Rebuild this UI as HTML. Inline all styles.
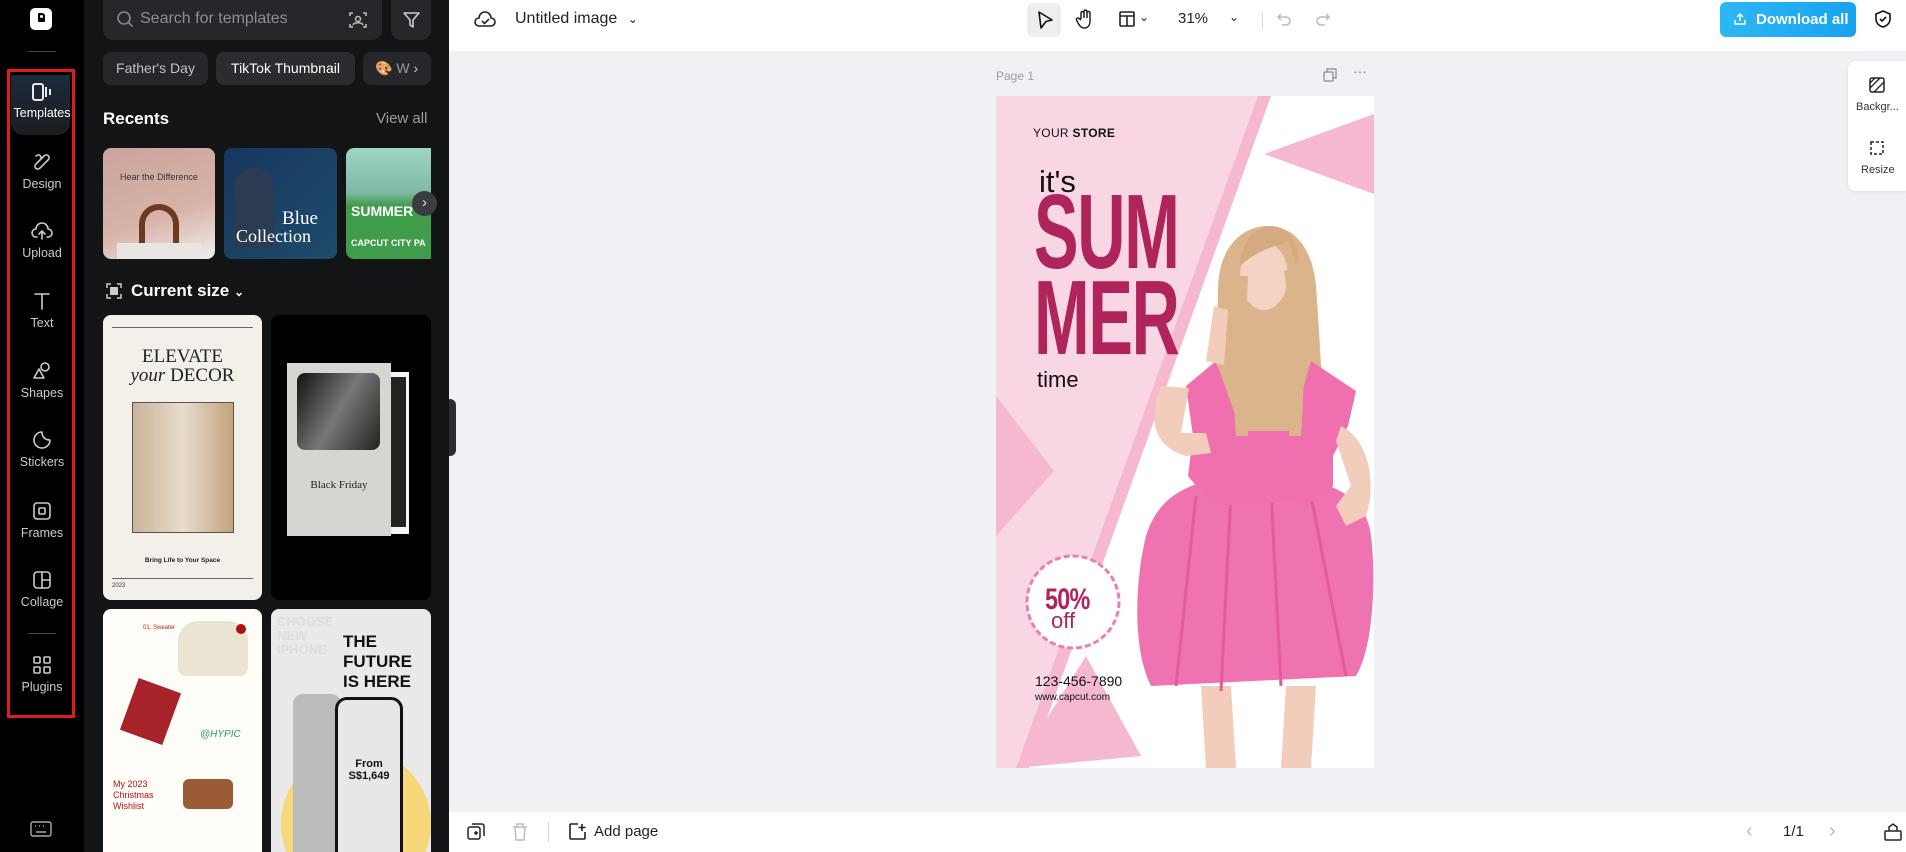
<!DOCTYPE html>
<html><head><meta charset="utf-8"><style>
*{box-sizing:border-box;margin:0;padding:0}
html,body{width:1906px;height:852px;overflow:hidden}
body{font-family:"Liberation Sans",sans-serif;background:#eff1f4;position:relative}
.abs{position:absolute}
#rail{left:0;top:0;width:84px;height:852px;background:#000}
#panel{left:84px;top:0;width:365px;height:852px;background:#131416;overflow:hidden}
.ri{position:absolute;left:0;width:84px;text-align:center;color:#c9cacc;font-size:12.5px}
.ri svg{display:block;margin:0 auto 4px}
.chip{position:absolute;top:52px;height:33px;border-radius:8px;background:#25272b;color:#bfc1c4;font-size:14px;line-height:33px;text-align:center}
#top{left:449px;top:0;width:1457px;height:51px;background:#fff}
#bot{left:449px;top:812px;width:1457px;height:40px;background:#fff}
.ic{stroke:#333;fill:none;stroke-width:1.6;stroke-linecap:round;stroke-linejoin:round}
</style></head><body>

<div id="rail" class="abs">
  <div class="abs" style="left:30px;top:8px;width:22px;height:22px;background:#fff;border-radius:5px"><div class="abs" style="left:8px;top:5px;width:7px;height:9px;background:#000;border-radius:1px 3px 1px 1px"></div><div class="abs" style="left:10px;top:7px;width:3px;height:3px;background:#fff;border-radius:50%"></div></div>
  <div class="abs" style="left:28px;top:51px;width:28px;height:1px;background:#444"></div>
  <div class="abs" style="left:7px;top:69px;width:68px;height:649px;border:3px solid #e01b1b"></div>
  <div class="abs" style="left:11px;top:75px;width:59px;height:60px;background:linear-gradient(#1d2a38,#1a1d22);border-radius:0 0 12px 12px"></div>
  <div class="ri" style="top:82px;color:#fff"><svg width="22" height="20" viewBox="0 0 22 20"><rect x="2" y="2" width="10" height="16" rx="2" stroke="#fff" stroke-width="1.8" fill="none"/><path d="M15 5v10M19 7v6" stroke="#fff" stroke-width="1.8"/></svg>Templates</div>
  <div class="ri" style="top:151px"><svg width="22" height="22" viewBox="0 0 22 22" class="ic" style="stroke:#c9cacc"><path d="M5 5c3-3 7 1 4 4L5 13c-3 3 1 7 4 4l8-8c3-3-1-7-4-4L5 13"/></svg>Design</div>
  <div class="ri" style="top:220px"><svg width="24" height="22" viewBox="0 0 24 22" class="ic" style="stroke:#c9cacc"><path d="M7 17H6a4 4 0 0 1 0-8 6 6 0 0 1 12 0 4 4 0 0 1 0 8h-1M12 19v-8M9 14l3-3 3 3"/></svg>Upload</div>
  <div class="ri" style="top:290px"><svg width="22" height="22" viewBox="0 0 22 22" class="ic" style="stroke:#c9cacc"><path d="M4 4h14M11 4v15"/></svg>Text</div>
  <div class="ri" style="top:360px"><svg width="22" height="22" viewBox="0 0 22 22" class="ic" style="stroke:#c9cacc"><circle cx="14" cy="7" r="4"/><path d="M3 18l5-9 5 9z"/></svg>Shapes</div>
  <div class="ri" style="top:429px"><svg width="22" height="22" viewBox="0 0 22 22" class="ic" style="stroke:#c9cacc"><path d="M19 11A8 8 0 1 1 11 3c0 5 3 8 8 8z"/></svg>Stickers</div>
  <div class="ri" style="top:500px"><svg width="22" height="22" viewBox="0 0 22 22" class="ic" style="stroke:#c9cacc"><rect x="3" y="3" width="16" height="16" rx="3"/><rect x="8" y="8" width="6" height="6" rx="1"/></svg>Frames</div>
  <div class="ri" style="top:569px"><svg width="22" height="22" viewBox="0 0 22 22" class="ic" style="stroke:#c9cacc"><rect x="3" y="3" width="16" height="16" rx="3"/><path d="M11 3v16M11 11h8"/></svg>Collage</div>
  <div class="abs" style="left:28px;top:633px;width:28px;height:1px;background:#444"></div>
  <div class="ri" style="top:654px"><svg width="22" height="22" viewBox="0 0 22 22" class="ic" style="stroke:#c9cacc"><rect x="3" y="3" width="6" height="6" rx="1"/><rect x="13" y="3" width="6" height="6" rx="1"/><rect x="3" y="13" width="6" height="6" rx="1"/><rect x="13" y="13" width="6" height="6" rx="1"/></svg>Plugins</div>
  <svg class="abs" style="left:30px;top:821px" width="22" height="16" viewBox="0 0 22 16"><rect x="1" y="1" width="20" height="14" rx="2" stroke="#aaa" fill="none" stroke-width="1.4"/><path d="M5 5h1M9 5h1M13 5h1M17 5h0M6 11h10" stroke="#aaa" stroke-width="1.4"/></svg>
</div>

<div id="panel" class="abs">
  <div class="abs" style="left:19px;top:0;width:279px;height:40px;background:#25272b;border-radius:0 0 10px 10px"></div>
  <svg class="abs" style="left:32px;top:10px" width="18" height="18" viewBox="0 0 18 18"><circle cx="8" cy="8" r="6" stroke="#888" stroke-width="1.6" fill="none"/><path d="M12.5 12.5l4 4" stroke="#888" stroke-width="1.6"/></svg>
  <div class="abs" style="left:56px;top:10px;color:#8c8e92;font-size:16px">Search for templates</div>
  <svg class="abs" style="left:264px;top:10px" width="20" height="20" viewBox="0 0 20 20"><path d="M2 6V3h3M15 3h3v3M18 14v3h-3M5 17H2v-3" stroke="#bbb" stroke-width="1.6" fill="none"/><circle cx="10" cy="9" r="2.5" stroke="#bbb" stroke-width="1.5" fill="none"/><path d="M5 15c1-3 9-3 10 0" stroke="#bbb" stroke-width="1.5" fill="none"/></svg>
  <div class="abs" style="left:307px;top:0;width:40px;height:40px;background:#25272b;border-radius:0 0 10px 10px"></div>
  <svg class="abs" style="left:317px;top:10px" width="20" height="20" viewBox="0 0 20 20"><path d="M3 3h15l-6 7v7l-3-2v-5z" stroke="#ccc" stroke-width="1.6" fill="none" stroke-linejoin="round"/></svg>
  <div class="chip" style="left:19px;width:105px">Father's Day</div>
  <div class="chip" style="left:132px;width:139px;color:#fff;background:#2a2c30">TikTok Thumbnail</div>
  <div class="chip" style="left:279px;width:68px;text-align:left;padding-left:12px;color:#999">🎨 W <span style="color:#ccc">›</span></div>
  <div class="abs" style="left:19px;top:109px;color:#fff;font-size:17px;font-weight:bold">Recents</div>
  <div class="abs" style="left:292px;top:110px;color:#9a9c9f;font-size:15px">View all</div>
  <div class="abs" style="left:19px;top:148px;width:112px;height:111px;border-radius:8px;background:linear-gradient(160deg,#c9a49a,#d8b3a8 60%,#eee);overflow:hidden">
    <div style="color:#333;font-size:9px;text-align:center;margin-top:24px">Hear the Difference</div>
    <div class="abs" style="left:36px;top:56px;width:40px;height:40px;border:6px solid #6b3a22;border-bottom:none;border-radius:20px 20px 0 0"></div>
    <div class="abs" style="left:14px;top:95px;width:84px;height:20px;background:#e8e6e3"></div>
  </div>
  <div class="abs" style="left:140px;top:148px;width:113px;height:111px;border-radius:8px;background:linear-gradient(135deg,#16365e,#1f4c6b);overflow:hidden">
    <div class="abs" style="left:10px;top:20px;width:40px;height:80px;background:#2c3b52;border-radius:20px 20px 0 0"></div>
    <div class="abs" style="left:58px;top:60px;color:#fff;font-family:'Liberation Serif',serif;font-size:19px">Blue</div>
    <div class="abs" style="left:12px;top:78px;color:#fff;font-family:'Liberation Serif',serif;font-size:18px">Collection</div>
  </div>
  <div class="abs" style="left:262px;top:148px;width:85px;height:111px;border-radius:8px 0 0 8px;background:linear-gradient(#9ed6c6 0,#7fb9a5 40%,#3f9c4a 52%,#3f9c4a);overflow:hidden">
    <div class="abs" style="left:5px;top:55px;color:#fff;font-weight:bold;font-size:14px">SUMMER</div>
    <div class="abs" style="left:5px;top:90px;color:#fff;font-weight:bold;font-size:9px">CAPCUT CITY PA</div>
  </div>
  <div class="abs" style="left:328px;top:191px;width:25px;height:25px;border-radius:50%;background:#3a3c40;color:#ddd;text-align:center;line-height:24px;font-size:15px">›</div>
  <svg class="abs" style="left:22px;top:283px" width="16" height="16" viewBox="0 0 16 16"><path d="M1 5V1h4M11 1h4v4M15 11v4h-4M5 15H1v-4" stroke="#ccc" stroke-width="1.5" fill="none"/><rect x="4" y="4" width="8" height="8" fill="#ccc"/></svg>
  <div class="abs" style="left:47px;top:281px;color:#fff;font-size:17px;font-weight:bold">Current size <span style="font-size:12px">⌄</span></div>
  <div class="abs" style="left:19px;top:315px;width:159px;height:285px;background:#f3efe9;border-radius:8px;overflow:hidden">
    <div class="abs" style="left:9px;top:12px;width:141px;height:1px;background:#666"></div>
    <div class="abs" style="left:0;top:32px;width:159px;text-align:center;font-family:'Liberation Serif',serif;font-size:19px;color:#222;line-height:19px">ELEVATE<br><i>your</i> DECOR</div>
    <div class="abs" style="left:29px;top:87px;width:102px;height:131px;background:linear-gradient(90deg,#c9b49a,#e8dccb 50%,#c2a37e);border:1px solid #555"></div>
    <div class="abs" style="left:0;top:242px;width:159px;text-align:center;font-size:6.5px;font-weight:bold;color:#222">Bring Life to Your Space</div>
    <div class="abs" style="left:9px;top:263px;width:141px;height:1px;background:#666"></div>
    <div class="abs" style="left:9px;top:268px;font-size:6px;color:#333">2023</div>
  </div>
  <div class="abs" style="left:187px;top:315px;width:160px;height:285px;background:#000;border-radius:8px;overflow:hidden">
    <div class="abs" style="left:112px;top:57px;width:26px;height:162px;background:#f4f4f2"></div>
    <div class="abs" style="left:115px;top:62px;width:20px;height:150px;background:#222"></div>
    <div class="abs" style="left:16px;top:48px;width:104px;height:173px;background:#d6d5d0"></div>
    <div class="abs" style="left:26px;top:58px;width:83px;height:77px;background:linear-gradient(120deg,#111,#777 50%,#222);border-radius:8px"></div>
    <div class="abs" style="left:16px;top:164px;width:104px;text-align:center;font-family:'Liberation Serif',serif;font-size:11px;color:#222">Black Friday</div>
  </div>
  <div class="abs" style="left:19px;top:609px;width:159px;height:243px;background:#fffdf8;border-radius:8px 8px 0 0;overflow:hidden">
    <div class="abs" style="left:40px;top:16px;font-size:6px;color:#b22">01. Sweater</div>
    <div class="abs" style="left:75px;top:12px;width:70px;height:55px;background:#ece4d2;border-radius:20px 20px 8px 8px"></div>
    <div class="abs" style="left:133px;top:15px;width:10px;height:10px;background:#b10f0f;border-radius:50%"></div>
    <div class="abs" style="left:25px;top:75px;width:45px;height:55px;background:#a8222a;transform:rotate(20deg)"></div>
    <div class="abs" style="left:97px;top:120px;font-size:10px;font-style:italic;color:#2a9d63">@HYPIC</div>
    <div class="abs" style="left:10px;top:170px;font-size:9px;color:#b11;line-height:11px">My 2023<br>Christmas<br>Wishlist</div>
    <div class="abs" style="left:80px;top:170px;width:50px;height:30px;background:#9a5a36;border-radius:6px"></div>
  </div>
  <div class="abs" style="left:187px;top:609px;width:160px;height:243px;background:#e9e9e9;border-radius:8px 8px 0 0;overflow:hidden">
    <div class="abs" style="left:6px;top:6px;font-size:13px;font-weight:bold;color:#ddd;line-height:14px">CHOOSE<br>NEW<br>IPHONE</div>
    <div class="abs" style="left:72px;top:23px;font-size:17px;font-weight:bold;color:#111;line-height:20px">THE<br>FUTURE<br>IS HERE</div>
    <div class="abs" style="left:10px;top:140px;width:150px;height:150px;border-radius:50%;background:#f6d77a"></div>
    <div class="abs" style="left:22px;top:85px;width:48px;height:170px;background:#bcbcbc;border-radius:10px"></div>
    <div class="abs" style="left:64px;top:88px;width:68px;height:170px;background:#e7e7e7;border:3px solid #111;border-radius:12px"></div>
    <div class="abs" style="left:64px;top:149px;width:68px;text-align:center;font-size:11px;font-weight:bold;color:#111">From<br>S$1,649</div>
  </div>
</div>
<div class="abs" style="left:449px;top:399px;width:7px;height:57px;background:#2a2c30;border-radius:0 6px 6px 0"></div>

<div id="top" class="abs">
  <svg class="abs" style="left:25px;top:9px" width="22" height="20" viewBox="0 0 22 20"><path d="M6 17H5a4 4 0 0 1 0-8 6 6 0 0 1 12 0 4 4 0 0 1 0 8H6z" stroke="#222" stroke-width="1.6" fill="none"/><path d="M8 12l2.5 2.5L15 10" stroke="#222" stroke-width="1.6" fill="none"/></svg>
  <div class="abs" style="left:66px;top:10px;font-size:16px;color:#222">Untitled image <span style="font-size:12px;margin-left:6px">⌄</span></div>
  <div class="abs" style="left:578px;top:3px;width:34px;height:34px;background:#eceef1;border-radius:6px"></div>
  <svg class="abs" style="left:586px;top:9px" width="20" height="22" viewBox="0 0 20 22"><path d="M4 3l13 8-6 1.5L6 19z" stroke="#111" stroke-width="1.6" fill="none" stroke-linejoin="round"/></svg>
  <svg class="abs" style="left:625px;top:8px" width="22" height="22" viewBox="0 0 22 22"><path d="M7 11V5a1.5 1.5 0 0 1 3 0v5V3.5a1.5 1.5 0 0 1 3 0V10V5a1.5 1.5 0 0 1 3 0v8c0 4-2 7-6 7-3 0-4-2-6-5l-1.5-3a1.5 1.5 0 0 1 2.5-1.5L7 12" stroke="#222" stroke-width="1.5" fill="none"/></svg>
  <svg class="abs" style="left:669px;top:10px" width="18" height="18" viewBox="0 0 18 18"><rect x="2" y="2" width="14" height="14" rx="1" stroke="#222" stroke-width="1.6" fill="none"/><path d="M2 6h14M9 6v10" stroke="#222" stroke-width="1.6"/></svg>
  <div class="abs" style="left:690px;top:10px;font-size:12px;color:#222">⌄</div>
  <div class="abs" style="left:729px;top:10px;font-size:15px;color:#222">31%</div>
  <div class="abs" style="left:780px;top:10px;font-size:12px;color:#222">⌄</div>
  <div class="abs" style="left:813px;top:12px;width:1px;height:18px;background:#ddd"></div>
  <svg class="abs" style="left:826px;top:11px" width="18" height="18" viewBox="0 0 18 18"><path d="M6 3L3 6l3 3M3 6h8a4 4 0 0 1 0 8H7" stroke="#bbb" stroke-width="1.5" fill="none"/></svg>
  <svg class="abs" style="left:865px;top:11px" width="18" height="18" viewBox="0 0 18 18"><path d="M12 3l3 3-3 3M15 6H7a4 4 0 0 0 0 8h4" stroke="#bbb" stroke-width="1.5" fill="none"/></svg>
  <div class="abs" style="left:1271px;top:2px;width:136px;height:35px;background:linear-gradient(90deg,#2db7f5,#18a3f0);border-radius:6px;color:#fff;font-size:15px;font-weight:bold;line-height:35px;padding-left:36px">Download all</div>
  <svg class="abs" style="left:1284px;top:12px" width="14" height="14" viewBox="0 0 14 14"><path d="M2 8v4h10V8M7 9V2M4 5l3-3 3 3" stroke="#fff" stroke-width="1.5" fill="none"/></svg>
  <svg class="abs" style="left:1424px;top:9px" width="20" height="20" viewBox="0 0 20 20"><path d="M10 2l7 3v5c0 4-3 7-7 8-4-1-7-4-7-8V5z" stroke="#111" stroke-width="1.6" fill="none"/><path d="M7 10l2 2 4-4" stroke="#111" stroke-width="1.6" fill="none"/></svg>
</div>

<div class="abs" style="left:996px;top:69px;font-size:12px;color:#9a9ca0">Page 1</div>
<svg class="abs" style="left:1323px;top:68px" width="14" height="14" viewBox="0 0 14 14"><rect x="1" y="4" width="9" height="9" rx="1" stroke="#888" stroke-width="1.2" fill="none"/><path d="M4 4V1h9v9h-3" stroke="#888" stroke-width="1.2" fill="none"/></svg>
<div class="abs" style="left:1353px;top:63px;font-size:14px;color:#777">···</div>

<div class="abs" style="left:996px;top:96px;width:378px;height:672px;background:#fff;overflow:hidden">
  <svg class="abs" style="left:0;top:0" width="378" height="672" viewBox="0 0 378 672">
    <polygon points="0,0 275,0 30,672 0,672" fill="#f9d6e3"/>
    <polygon points="262,0 275,0 33,672 20,672" fill="#f5b8d0"/>
    <polygon points="268,58 378,18 378,98" fill="#f5b8d0"/>
    <polygon points="0,300 58,375 0,440" fill="#f5b8d0"/>
    <polygon points="90,560 145,660 20,672" fill="#f5b8d0"/>
    <!-- hair back -->
    <path d="M222 195c0-45 25-65 50-65 28 0 45 25 48 60 5 70 10 150 5 230l-25 20-25-10-30 0-20-20c0-70-5-150-3-215z" fill="#dcb48c"/>
    <!-- legs -->
    <path d="M205 590h30l5 82h-30zM290 590h30l-5 82h-30z" fill="#f2cdbb"/>
    <!-- skirt -->
    <path d="M150 440c15-50 60-60 115-60 60 0 105 15 110 60 5 40 3 110-15 140l-205 10c-20-40-15-110-5-150z" fill="#ef72b1"/>
    <path d="M200 400l-20 190M235 395l-10 200M275 395l10 195M315 400l35 180" stroke="#e25b9d" stroke-width="3"/>
    <!-- bodice -->
    <path d="M190 290l30-25 25 70 50 0 20-70 45 30-8 35-15 30v30l-20 15-100 5-25-30 5-40z" fill="#f06fae"/>
    <!-- arms -->
    <path d="M165 290c-12 30-10 60 25 70l25-3-5-20-25 0 8-45z" fill="#f2cdbb"/>
    <path d="M345 330c30 15 35 60 25 90l-20 10-10-20 15-20-15-45z" fill="#f2cdbb"/>
    <path d="M218 210l-8 55 18 4 4-55z" fill="#f2cdbb"/>
    <!-- face -->
    <ellipse cx="268" cy="180" rx="24" ry="34" fill="#f3d3c3"/>
    <path d="M244 170c2-30 20-40 30-40 20 0 30 20 28 40l-10-25c-10 5-30 8-48 25z" fill="#d4aa80"/>
    <path d="M300 170c8 40 10 100 5 170l-12 0c5-60 2-120-5-165z" fill="#dcb48c"/>
    <path d="M240 180c-5 40-5 100 0 160l12 0c-3-60-2-120 0-160z" fill="#dcb48c"/>
    <circle cx="77" cy="506" r="46" fill="#fff" stroke="#ec7fb1" stroke-width="3" stroke-dasharray="6 3"/>
  </svg>
  <div class="abs" style="left:37px;top:30px;font-size:12px;color:#111;letter-spacing:.3px">YOUR <b>STORE</b></div>
  <div class="abs" style="left:43px;top:68px;font-size:31px;color:#111">it's</div>
  <div class="abs" style="left:38px;top:93px;font-size:106px;font-weight:bold;color:#b0245c;line-height:86px;letter-spacing:-2px;transform:scaleX(0.63);transform-origin:top left;white-space:nowrap">SUM<br>MER</div>
  <div class="abs" style="left:41px;top:271px;font-size:22px;color:#111">time</div>
  <div class="abs" style="left:49px;top:487px;font-size:30px;font-weight:bold;color:#b0245c;letter-spacing:-1px;transform:scaleX(0.78);transform-origin:top left">50%</div>
  <div class="abs" style="left:55px;top:512px;font-size:22px;color:#b0245c">off</div>
  <div class="abs" style="left:39px;top:577px;font-size:14px;color:#111">123-456-7890</div>
  <div class="abs" style="left:39px;top:596px;font-size:10px;color:#111">www.capcut.com</div>
</div>

<div class="abs" style="left:1848px;top:61px;width:58px;height:130px;background:#fff;border-radius:8px 0 0 8px;box-shadow:0 1px 4px rgba(0,0,0,.08)"></div>
<svg class="abs" style="left:1868px;top:76px" width="18" height="18" viewBox="0 0 18 18"><rect x="2" y="2" width="14" height="14" rx="2" stroke="#222" stroke-width="1.5" fill="none"/><path d="M2 12L12 2M6 16L16 6M2 7l5-5" stroke="#222" stroke-width="1.3"/></svg>
<div class="abs" style="left:1856px;top:101px;font-size:11px;color:#333">Backgr...</div>
<svg class="abs" style="left:1868px;top:139px" width="18" height="18" viewBox="0 0 18 18"><rect x="3" y="3" width="12" height="12" stroke="#222" stroke-width="1.5" fill="none" stroke-dasharray="3 2"/></svg>
<div class="abs" style="left:1861px;top:164px;font-size:11px;color:#333">Resize</div>

<div id="bot" class="abs">
  <svg class="abs" style="left:17px;top:10px" width="20" height="20" viewBox="0 0 20 20"><rect x="2" y="5" width="12" height="12" rx="2" stroke="#222" stroke-width="1.5" fill="none"/><path d="M6 2h10a2 2 0 0 1 2 2v10M8 11h4M10 9v4" stroke="#222" stroke-width="1.5" fill="none"/></svg>
  <svg class="abs" style="left:62px;top:10px" width="18" height="20" viewBox="0 0 18 20"><path d="M2 5h14M6 5V2h6v3M4 5l1 13h8l1-13" stroke="#bbb" stroke-width="1.5" fill="none"/></svg>
  <div class="abs" style="left:99px;top:10px;width:1px;height:20px;background:#ddd"></div>
  <svg class="abs" style="left:119px;top:10px" width="20" height="20" viewBox="0 0 20 20"><path d="M17 10v6a1 1 0 0 1-1 1H3a1 1 0 0 1-1-1V3a1 1 0 0 1 1-1h7M14 2v7M10.5 5.5h7" stroke="#222" stroke-width="1.6" fill="none"/></svg>
  <div class="abs" style="left:145px;top:11px;font-size:15px;color:#222">Add page</div>
  <div class="abs" style="left:1297px;top:8px;font-size:20px;color:#bbb">‹</div>
  <div class="abs" style="left:1334px;top:11px;font-size:15px;color:#222">1/1</div>
  <div class="abs" style="left:1380px;top:8px;font-size:20px;color:#bbb">›</div>
  <svg class="abs" style="left:1434px;top:10px" width="20" height="20" viewBox="0 0 20 20"><rect x="2" y="9" width="16" height="9" rx="1" stroke="#222" stroke-width="1.5" fill="none"/><path d="M6 9V5l4-3 4 3v4" stroke="#222" stroke-width="1.5" fill="none"/></svg>
</div>
</body></html>
